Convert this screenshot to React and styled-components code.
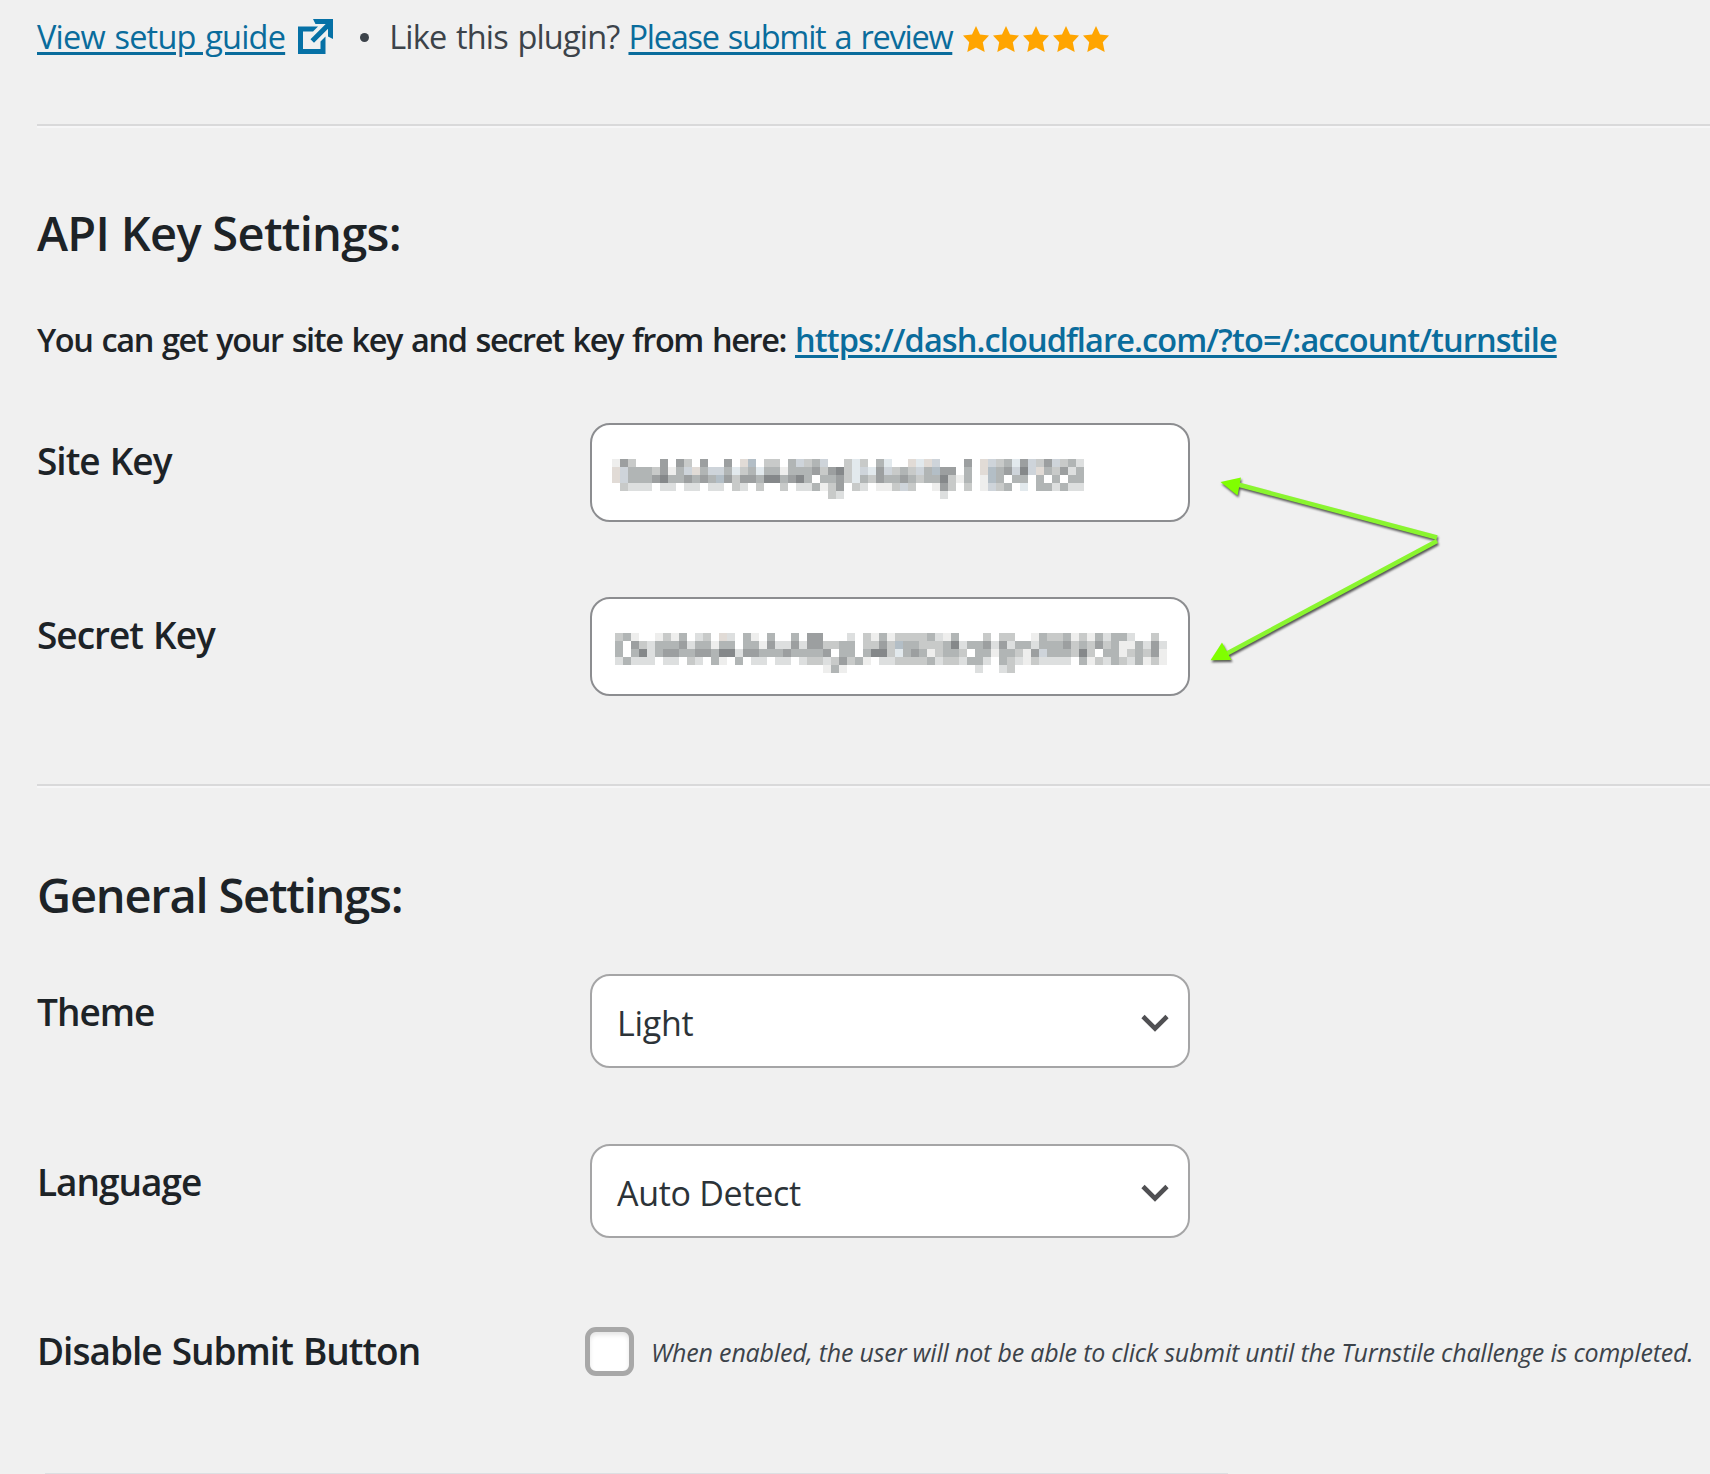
import React, { useState } from 'react';
import styled, { createGlobalStyle } from 'styled-components';

const SITE_KEY = [
  '153...5.53.5..5.wc.33.4b34b..3a3.4a..wawb...5.wb34a5b35b342',
  'wb4443514bw4bb4a34a44144453563aba5b343b4c55.4.wc45b6bw43524',
  'wb44456445454c53554664564.4453a43544543446314.1c4.44.4.4.44',
  '.3222.22.22.22.32.3..3.224135.32.113b3..153.3.1b34.a.442422',
  '...........................32............2.................',
];

const SECRET_KEY = [
  '341..1314.23.w2.41.4..4.55...2.314133334214...3.33..1433413142442..3.',
  '4.5324445244144.44152252553344.3353c443334624452524424445343534114252',
  '4.4624554455466255444544445.44.4663a45413443.44144315b444363.44134351',
  '24222.22.32.41.4.22.22.233235341.22333342332442.432132222.41324324131',
  '..........................141................2..23...................',
];

const SHADES = {
  1: '#eeeeed',
  2: '#dddfdf',
  3: '#c8cac9',
  4: '#b1b5b5',
  5: '#9c9fa0',
  6: '#85888a',
  a: '#e2e9ed',
  b: '#ced4da',
  c: '#b3bec6',
  w: '#e1dbd6',
};

const MaskedKey = ({ rows, label }) => (
  <svg
    width={rows[0].length * 8}
    height={rows.length * 8}
    shapeRendering="crispEdges"
    role="img"
    aria-label={label}
  >
    {rows.map((row, y) =>
      row.split('').map((cell, x) =>
        SHADES[cell] ? (
          <rect key={`${x}-${y}`} x={x * 8} y={y * 8} width="8" height="8" fill={SHADES[cell]} />
        ) : null
      )
    )}
  </svg>
);

const ExternalIcon = () => (
  <svg width="35" height="35" viewBox="3 3 14 14">
    <path d="M9 3h8v8l-2-1V6.92l-5.6 5.59-1.41-1.41L14.08 5H10zm3 12v-3l2-2v7H3V6h8L9 8H5v7h7z" fill="#0671a6" />
  </svg>
);

const Star = () => (
  <svg width="26" height="26" viewBox="0 0 26 26">
    <path d="M13 0L17 8.5L26 9.6L19.8 16.2L21.7 26L13 21.5L4.3 26L6.2 16.2L0 9.6L9 8.5Z" fill="#ffa500" />
  </svg>
);

const Chevron = () => (
  <svg width="28" height="18" viewBox="0 0 28 18" fill="none">
    <path d="M2 2.5L14 14.5L26 2.5" stroke="#505053" strokeWidth="4.6" />
  </svg>
);

const App = () => {
  const [checked, setChecked] = useState(false);
  return (
    <Page>
      <GlobalStyle />
      <Intro>
        <Link href="#guide" $spacing={-0.8}>View setup guide</Link>
        <IconSlot>
          <ExternalIcon />
        </IconSlot>
        <Dot />
        <IntroText>Like this plugin?</IntroText>
        <Link href="#review" $spacing={-1.27}>Please submit a review</Link>
        <Stars>
          {[1, 2, 3, 4, 5].map((n) => (
            <Star key={n} />
          ))}
        </Stars>
      </Intro>
      <Divider />

      <Heading $top={75} $spacing={-0.7}>API Key Settings:</Heading>
      <Hint>
        <span>You can get your site key and secret key from here:</span>
        <Link href="#turnstile" $spacing={-0.89}>https://dash.cloudflare.com/?to=/:account/turnstile</Link>
      </Hint>
      <Row $height={99} $gap={75}>
        <Label>Site Key</Label>
        <KeyField $left={20}>
          <MaskedKey rows={SITE_KEY} label="Site key hidden" />
        </KeyField>
      </Row>
      <Row $height={99} $gap={88}>
        <Label>Secret Key</Label>
        <KeyField $left={23}>
          <MaskedKey rows={SECRET_KEY} label="Secret key hidden" />
        </KeyField>
      </Row>
      <Divider />

      <Heading $top={77} $spacing={-1.2}>General Settings:</Heading>
      <Row $height={94} $gap={76} $top={49}>
        <Label>Theme</Label>
        <Select>
          <span>Light</span>
          <Chevron />
        </Select>
      </Row>
      <Row $height={94} $gap={89}>
        <Label>Language</Label>
        <Select>
          <span>Auto Detect</span>
          <Chevron />
        </Select>
      </Row>
      <Row $height={50} $gap={96}>
        <Label $top={-1}>Disable Submit Button</Label>
        <CheckArea>
          <Checkbox type="checkbox" checked={checked} onChange={() => setChecked(!checked)} />
          <Note>When enabled, the user will not be able to click submit until the Turnstile challenge is completed.</Note>
        </CheckArea>
      </Row>
      <BottomEdge />

      <Arrows width="250" height="210" viewBox="1200 465 250 210">
        <g stroke="#8af52f" strokeWidth="4.4">
          <path d="M1238 484.5L1437 537.5" />
          <path d="M1226 654L1437 541" />
        </g>
        <g fill="#80ff00">
          <path d="M1220.5 482L1241 477.5L1237.5 495.5Z" />
          <path d="M1210.5 660.3L1222 642.5L1231.5 660Z" />
        </g>
      </Arrows>
    </Page>
  );
};

const GlobalStyle = createGlobalStyle`
  * {
    box-sizing: border-box;
  }
  body {
    margin: 0;
    background: #f0f0f0;
    font-family: 'Open Sans', 'Noto Sans', sans-serif;
    color: #3c434a;
    overflow: hidden;
  }
`;

const Page = styled.main`
  position: relative;
  width: 1710px;
  height: 1474px;
  padding-left: 37px;
  overflow: hidden;
  white-space: nowrap;
`;

const Intro = styled.div`
  display: flex;
  align-items: center;
  height: 124px;
  padding-bottom: 52px;
  padding-top: 2px;
  font-size: 32.5px;
  line-height: 68px;
  word-spacing: 2px;
`;

const Link = styled.a`
  color: #0a6c9c;
  letter-spacing: ${({ $spacing }) => $spacing}px;
  text-decoration: underline;
  text-decoration-thickness: 3px;
  text-underline-offset: 3px;
`;

const IconSlot = styled.span`
  display: flex;
  margin: -2px 0 0 13px;
`;

const Dot = styled.span`
  width: 9px;
  height: 9px;
  margin: 0 20px 0 27px;
  border-radius: 50%;
  background: #3c434a;
`;

const IntroText = styled.span`
  margin-right: 9px;
  letter-spacing: -0.83px;
`;

const Stars = styled.span`
  display: flex;
  gap: 4px;
  margin: 4px 0 0 11px;
`;

const Divider = styled.hr`
  height: 4px;
  margin: 0;
  border: 0;
  border-top: 2px solid #d9d9da;
  border-bottom: 2px solid #f6f6f7;
`;

const Heading = styled.h2`
  margin: ${({ $top }) => $top}px 0 0;
  color: #1d2327;
  font-size: 47px;
  font-weight: 600;
  line-height: 60px;
  letter-spacing: ${({ $spacing }) => $spacing}px;
`;

const Hint = styled.h3`
  display: flex;
  gap: 9px;
  margin: 54px 0 60px;
  color: #1d2327;
  font-size: 32.5px;
  font-weight: 600;
  line-height: 46px;
  letter-spacing: -1.41px;
  word-spacing: 2px;
`;

const Row = styled.div`
  display: flex;
  align-items: flex-start;
  height: ${({ $height }) => $height}px;
  margin-top: ${({ $top }) => $top || 0}px;
  margin-bottom: ${({ $gap }) => $gap}px;
`;

const Label = styled.label`
  width: 553px;
  flex: none;
  margin-top: ${({ $top = 13 }) => $top}px;
  color: #1d2327;
  font-size: 37px;
  font-weight: 600;
  line-height: 50px;
  letter-spacing: -1px;
  word-spacing: 1.5px;
`;

const Field = styled.div`
  display: flex;
  align-items: center;
  width: 600px;
  height: 100%;
  border: 2px solid #8c8d90;
  border-radius: 20px;
  background: #fff;
`;

const KeyField = styled(Field)`
  padding-left: ${({ $left }) => $left}px;
  padding-top: 13px;
`;

const Select = styled(Field)`
  justify-content: space-between;
  padding: 3px 19px 0 25px;
  border-color: #a5a5a6;
  color: #2c3338;
  font-size: 34px;
  line-height: 48px;
  letter-spacing: -0.3px;
`;

const CheckArea = styled.div`
  display: flex;
  align-items: center;
  margin-left: -5px;
`;

const Checkbox = styled.input`
  appearance: none;
  width: 49px;
  height: 49px;
  margin: 0;
  border: 5.5px solid #a8a8a8;
  border-radius: 11px;
  background: #fff;
  box-shadow: inset 0 3px 4px rgba(0, 0, 0, 0.1);
`;

const Note = styled.em`
  margin-left: 17px;
  font-size: 25px;
  line-height: 48px;
  letter-spacing: -0.19px;
`;

const BottomEdge = styled.div`
  width: 1183px;
  height: 1px;
  margin-left: 8px;
  background: #dcdfe2;
`;

const Arrows = styled.svg`
  position: absolute;
  left: 1200px;
  top: 465px;
  filter: drop-shadow(1.5px 2px 1px rgba(0, 0, 0, 0.65));
`;

export default App;
